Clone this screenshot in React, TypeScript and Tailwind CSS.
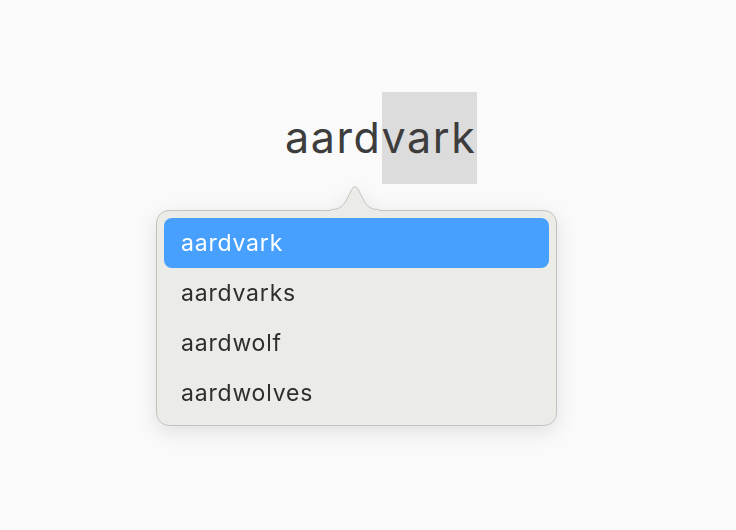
import React from 'react';

const items = ['aardvark', 'aardvarks', 'aardwolf', 'aardwolves'];

export default function App() {
  return (
    <div className="w-full h-[530px] bg-[#fafafa] overflow-hidden" style={{ fontFamily: 'Inter, "Noto Sans", sans-serif' }}>
      {/* word being edited */}
      <div className="pt-[92px] pl-[285px]">
        <div className="flex items-stretch h-[92px] text-[43px] text-[#3d3d3d] leading-[90px] tracking-[1.6px]">
          <span>aard</span>
          <span className="bg-[#dcdcdc] pr-[1px]">vark</span>
        </div>
      </div>

      {/* suggestions popover */}
      <div className="ml-[156px] mt-[26px] w-[401px] relative drop-shadow-[0_6px_10px_rgba(0,0,0,0.10)]">
        <svg
          className="absolute left-[175px] top-[-26px]"
          width="48"
          height="29"
          viewBox="0 0 48 29"
        >
          <path d="M0,25.5 C8,25.5 11,23 15,17 L21,5 Q24,0 27,5 L33,17 C37,23 40,25.5 48,25.5 L48,29 L0,29 Z" fill="#ebece8" />
          <path d="M0,25.5 C8,25.5 11,23 15,17 L21,5 Q24,0 27,5 L33,17 C37,23 40,25.5 48,25.5" fill="none" stroke="#c2c2c0" strokeWidth="1" />
        </svg>
        <div className="rounded-[13px] border border-[#c2c2c0] bg-[#ebece8] px-[7px] py-[7px]">
          {items.map((item, i) => (
            <div
              key={item}
              className={`h-[50px] rounded-[8px] pl-[17px] flex items-center text-[23px] tracking-[0.8px] ${
                i === 0 ? 'bg-[#47a0fe] text-white' : 'text-[#2e2e2c]'
              }`}
            >
              {item}
            </div>
          ))}
        </div>
      </div>
    </div>
  );
}
